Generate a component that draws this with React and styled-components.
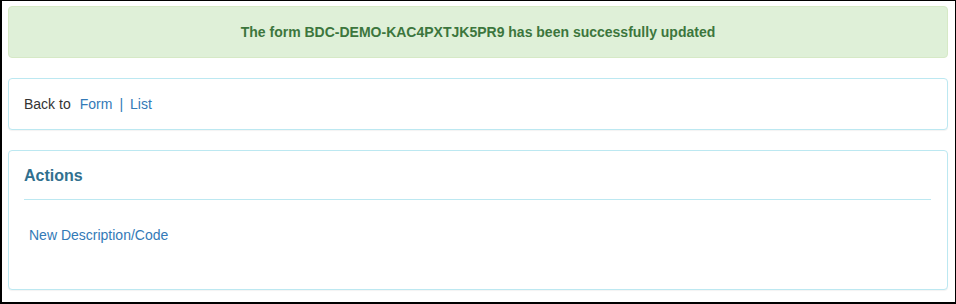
import React from "react";
import styled, { createGlobalStyle } from "styled-components";

const GlobalStyle = createGlobalStyle`
  html, body {
    margin: 0;
    padding: 0;
    background: #fff;
  }
  body {
    font-family: "Liberation Sans", Arial, sans-serif;
    font-size: 14px;
    color: #333;
  }
`;

const Frame = styled.div`
  box-sizing: border-box;
  width: 956px;
  height: 304px;
  border-style: solid;
  border-color: #000;
  border-width: 1px 1px 2px 2px;
  padding: 5px 7px 0 6px;
  display: flex;
  flex-direction: column;
  gap: 20px;
`;

const Alert = styled.div`
  background: #dff0d8;
  border: 1px solid #d6e9c6;
  border-radius: 4px;
  color: #3c763d;
  font-weight: bold;
  text-align: center;
  line-height: 20px;
  padding: 15px;
`;

const Panel = styled.div`
  background: #fff;
  border: 1px solid #bce8f1;
  border-radius: 4px;
  box-shadow: 0 1px 1px rgba(0, 0, 0, 0.05);
  padding: ${(p) => (p.$tall ? "15px 15px 44px" : "15px")};
  line-height: 20px;
`;

const Link = styled.a`
  color: #337ab7;
  text-decoration: none;
  margin-left: ${(p) => p.$gap || 0}px;
`;

const Sep = styled.span`
  color: #337ab7;
  margin: 0 7px;
`;

const Heading = styled.h4`
  margin: 0;
  font-size: 16px;
  font-weight: bold;
  line-height: 20px;
  color: #31708f;
`;

const Rule = styled.hr`
  border: 0;
  border-top: 1px solid #bce8f1;
  margin: 13px 1px 25px 0;
`;

const ActionList = styled.div`
  padding-left: 5px;
`;

export default function App() {
  return (
    <>
      <GlobalStyle />
      <Frame>
        <Alert>The form BDC-DEMO-KAC4PXTJK5PR9 has been successfully updated</Alert>
        <Panel>
          Back to
          <Link href="#" $gap={9}>Form</Link>
          <Sep>|</Sep>
          <Link href="#">List</Link>
        </Panel>
        <Panel $tall>
          <Heading>Actions</Heading>
          <Rule />
          <ActionList>
            <Link href="#">New Description/Code</Link>
          </ActionList>
        </Panel>
      </Frame>
    </>
  );
}
